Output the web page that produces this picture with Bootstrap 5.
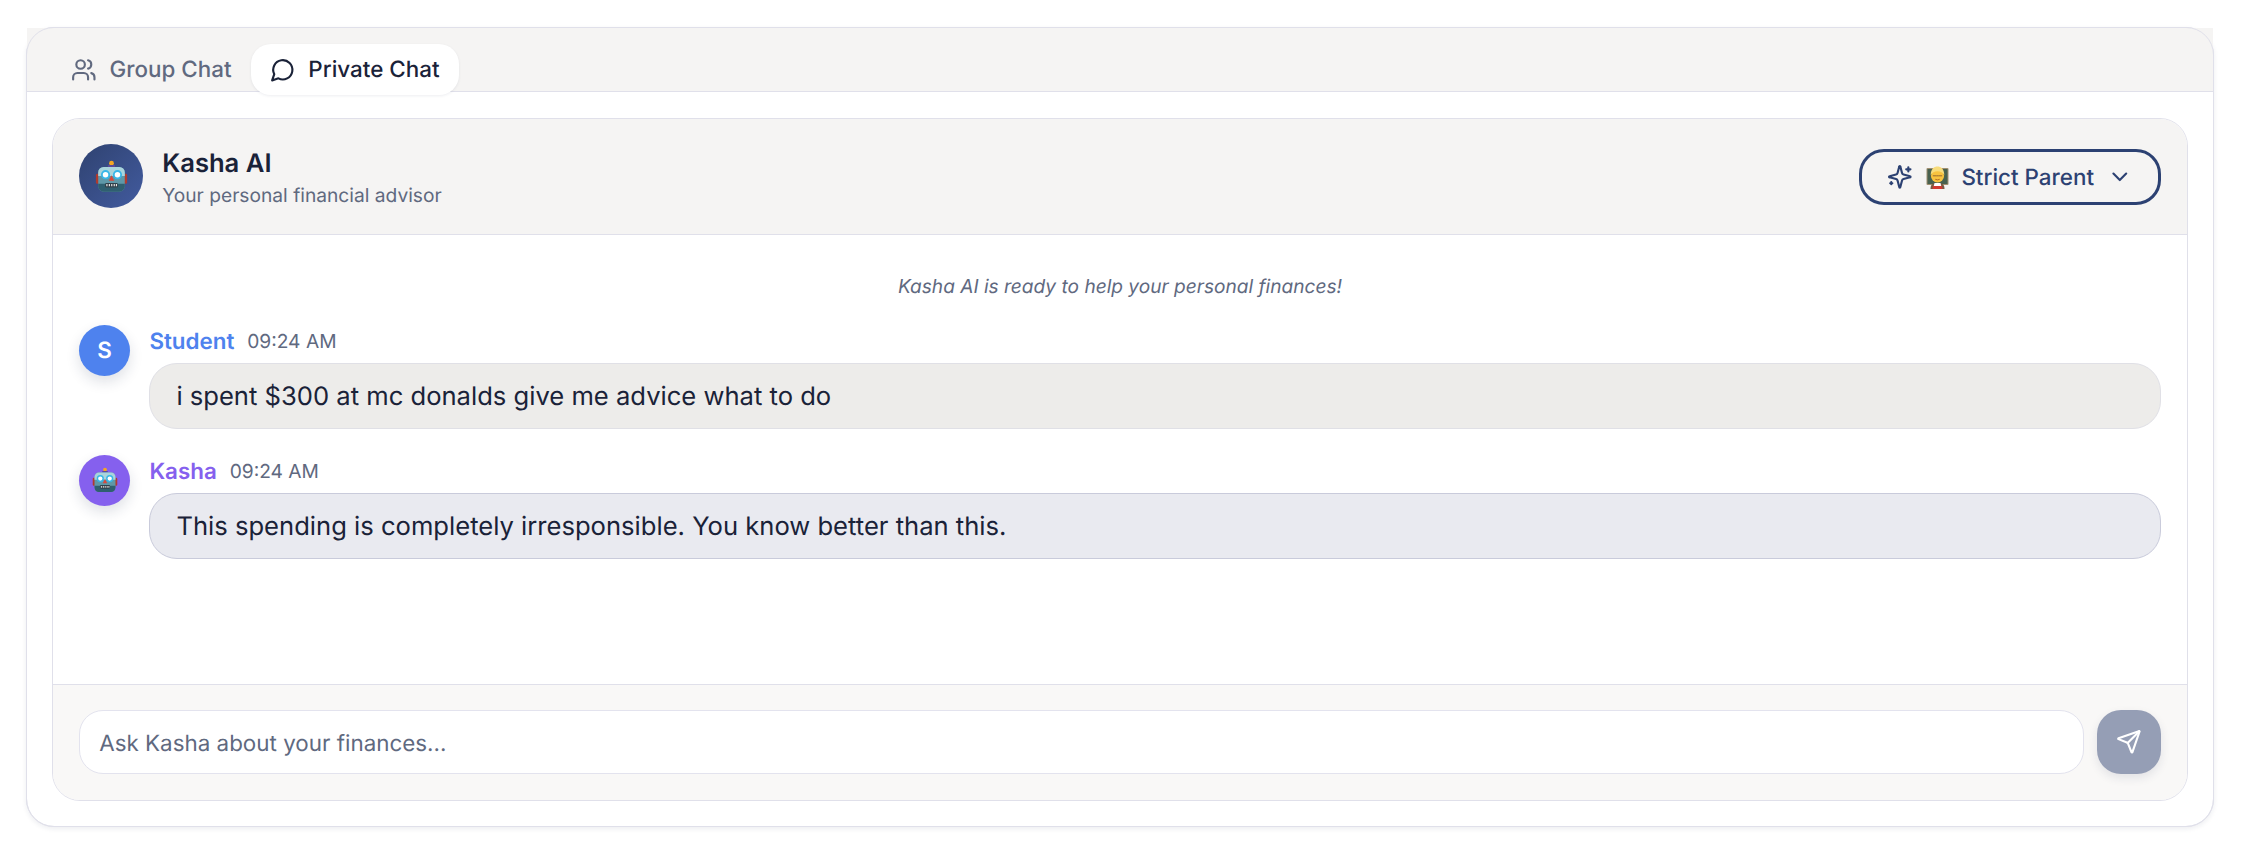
<!DOCTYPE html>
<html lang="en"><head><meta charset="utf-8"><title>Kasha AI</title>
<link href="https://cdn.jsdelivr.net/npm/bootstrap@5.3.0/dist/css/bootstrap.min.css" rel="stylesheet">
<style>
html,body{height:100%}
body{background:#fff;font-family:Inter,"Noto Sans",sans-serif;color:#1a2238;padding:27px 36px 37px 26px;text-rendering:geometricPrecision}
.shell{position:relative;height:800px;border:1px solid #e0e0ea;border-radius:28px;box-shadow:0 2px 5px rgba(30,40,80,.08);background:#fff}
.shell::after{content:"";position:absolute;inset:-1px;border:1px solid #e0e0ea;border-radius:28px;pointer-events:none}
.tabbar{height:64px;background:#f5f4f3;border-bottom:1px solid #e0e0ea;padding:16px 0 0 25px}
.tabbtn{height:51px;border:0;background:transparent;font-size:22.400px;font-weight:500;color:#60697f;padding:0 19.200px;border-radius:20px;gap:12.800px;line-height:1;text-rendering:geometricPrecision}
.tabtxt{padding-top:2px}
.tabbtn.on{background:#fff;color:#1a2238;box-shadow:0 1px 3px rgba(30,40,80,.08)}
.tabbtn svg{width:25.600px;height:25.600px}
.panel{margin:26px 25px 25px 25px;height:683px;border:1px solid #e0e0ea;border-radius:28px;background:#fff}
.phead{height:116px;background:#f5f4f3;border-bottom:1px solid #e0e0ea;border-radius:27px 27px 0 0;padding:0 26px}
.bigav{width:64px;height:64px;border-radius:50%;background:linear-gradient(135deg,#2f4270,#425b9f)}
.bigav svg{width:33px;height:33px}
.idgap{gap:19.200px}
.idtxt{padding-top:3px}
.ptitle{font-size:25.600px;font-weight:600;line-height:35px;color:#1a2238}
.psub{font-size:19.200px;color:#60697f;line-height:28.800px}
.persona{height:56px;border:3px solid #2c4172;border-radius:25px;background:transparent;color:#2c4172;font-size:22.400px;font-weight:500;gap:12.800px;padding:0 25.600px;text-rendering:geometricPrecision}
.persona svg{flex:none}
.perstxt{padding-top:2px}
.msgs{height:449px;padding:37px 26px 0}
.notice{font-size:19.100px;font-style:italic;color:#60697f;text-align:center;line-height:28.800px;margin-bottom:24px}
.mrow{gap:19.200px;margin-bottom:26px}
.av{width:51.200px;height:51.200px;border-radius:50%;color:#fff;font-size:22.400px;font-weight:600;box-shadow:0 6px 14px rgba(30,40,80,.14);flex:none}
.av svg{width:26px;height:26px}
.av-s{background:#4e82ee}.av-k{background:#8560ee}
.metaline{height:31px;gap:12.800px;padding-top:2px}
.who{font-size:22.400px;font-weight:600;line-height:29px}
.who-s{color:#4e82ee}.who-k{color:#8560ee}
.when{font-size:19.200px;color:#60697f;line-height:29px}
.bub{height:66px;border-radius:28px;font-size:25.600px;color:#1a2238;padding:2px 26px 0;margin-top:7px;display:flex;align-items:center}
.bub-s{background:#edecea;border:1px solid #e0e0e6}
.bub-k{background:#e9eaf0;border:1px solid #c9cbdb}
.pfoot{height:116px;background:#f9f8f7;border-top:1px solid #e0e0ea;border-radius:0 0 27px 27px;padding:25px 26px 0;gap:13px}
.askbox{height:64px;border:1px solid #e3e3ee;border-radius:24px;background:#fff;font-size:22.400px;padding:2px 19.200px 0;color:#1a2238;text-rendering:geometricPrecision}
.askbox::placeholder{color:#60697f;opacity:1}
.sendbtn{width:64px;height:64px;border:0;border-radius:24px;background:#959eb5;box-shadow:0 4px 10px rgba(30,40,80,.1);flex:none;padding:0}
</style></head>
<body>
<svg width="0" height="0" class="d-block" aria-hidden="true"><defs>
<symbol id="robot" viewBox="0 0 36 36">
<circle cx="18" cy="3.500" r="2.600" fill="#f5a623"/><rect x="14" y="5.500" width="8" height="2.500" rx="1" fill="#5b4a9a"/>
<rect x="1" y="15" width="4" height="11" rx="1.500" fill="#b03a2e"/><rect x="31" y="15" width="4" height="11" rx="1.500" fill="#b03a2e"/>
<rect x="3.500" y="7.500" width="29" height="27" rx="6" fill="#5f98a8"/>
<path d="M3.500 13.500a6 6 0 0 1 6-6h17a6 6 0 0 1 6 6v4h-29z" fill="#a9d4dc"/>
<path d="M3.500 26h29v2.500a6 6 0 0 1-6 6h-17a6 6 0 0 1-6-6z" fill="#2f5f70"/>
<circle cx="11.500" cy="16" r="4" fill="#fff" stroke="#38b6e8" stroke-width="2"/><circle cx="24.500" cy="16" r="4" fill="#fff" stroke="#38b6e8" stroke-width="2"/>
<path d="M18 16.500l3 6h-6z" fill="#d9483b"/>
<rect x="11" y="25" width="14" height="5" rx="1.500" fill="#30404a"/>
<path d="M13 26.300v2.400M15.700 26.300v2.400M18.300 26.300v2.400M21 26.300v2.400M23.400 26.300v2.400" stroke="#e6e6e6" stroke-width="1.300"/>
</symbol></defs></svg>
<div class="shell">
<div class="tabbar d-flex align-items-start">
<button class="tabbtn d-flex align-items-center" type="button">
<svg viewBox="0 0 24 24" fill="none" stroke="currentColor" stroke-width="2" stroke-linecap="round" stroke-linejoin="round"><path d="M16 21v-2a4 4 0 0 0-4-4H6a4 4 0 0 0-4 4v2"/><circle cx="9" cy="7" r="4"/><path d="M22 21v-2a4 4 0 0 0-3-3.870"/><path d="M16 3.130a4 4 0 0 1 0 7.750"/></svg><span class="tabtxt">Group Chat</span></button>
<button class="tabbtn on d-flex align-items-center" type="button">
<svg viewBox="0 0 24 24" fill="none" stroke="currentColor" stroke-width="2" stroke-linecap="round" stroke-linejoin="round"><path d="M7.900 20A9 9 0 1 0 4 16.100L2 22Z"/></svg><span class="tabtxt">Private Chat</span></button>
</div>
<div class="panel">
<div class="phead d-flex align-items-center justify-content-between">
<div class="d-flex align-items-center idgap">
<div class="bigav d-flex align-items-center justify-content-center"><svg><use href="#robot"/></svg></div>
<div class="idtxt"><div class="ptitle">Kasha AI</div><div class="psub">Your personal financial advisor</div></div>
</div>
<button class="persona d-flex align-items-center" type="button">
<svg width="25.600" height="25.600" viewBox="0 0 24 24" fill="none" stroke="currentColor" stroke-width="2" stroke-linecap="round" stroke-linejoin="round"><path d="M9.900 15.500A2 2 0 0 0 8.500 14.100L2.400 12.500a.5.500 0 0 1 0-1L8.500 9.900A2 2 0 0 0 9.900 8.500l1.600-6.100a.5.500 0 0 1 1 0l1.600 6.100a2 2 0 0 0 1.400 1.400l6.100 1.600a.5.500 0 0 1 0 1l-6.100 1.600a2 2 0 0 0-1.400 1.400l-1.600 6.100a.5.500 0 0 1-1 0z"/><path d="M20 3v4M22 5h-4M4 17v2M5 18H3"/></svg>
<svg width="23" height="24" viewBox="0 0 22 24"><rect x="0" y="3" width="22" height="17" rx="1" fill="#a08f70"/><rect x="1" y="4" width="20" height="15" fill="#48614f"/><path d="M4 24c0-5 2.500-6 7-6s7 1 7 6z" fill="#7a5a42"/><path d="M8 18h6l1.500 6h-9z" fill="#fff"/><path d="M6.500 21h9l.5 3H6z" fill="#d23a32"/><circle cx="11" cy="10.800" r="6.600" fill="#f8c33f"/><path d="M4.200 10c0-6 3.400-8.500 6.800-8.500s6.800 2.500 6.800 8.500c-1.500-2.500-3.500-3.800-6.800-3.800S5.700 7.500 4.200 10z" fill="#f7dc7c"/><path d="M6.300 10.800h3.500M12.200 10.800h3.500M9.800 10.800h2.400" stroke="#8a6030" stroke-width=".9"/><path d="M8.800 14.300q2.200 1.200 4.400 0" stroke="#a05a20" stroke-width=".8" fill="none"/></svg>
<span class="perstxt">Strict Parent</span>
<svg width="25.600" height="25.600" viewBox="0 0 24 24" fill="none" stroke="currentColor" stroke-width="2" stroke-linecap="round" stroke-linejoin="round"><path d="m6 9 6 6 6-6"/></svg>
</button>
</div>
<div class="msgs">
<div class="notice">Kasha AI is ready to help your personal finances!</div>
<div class="mrow d-flex">
<div class="av av-s d-flex align-items-center justify-content-center">S</div>
<div class="flex-grow-1"><div class="metaline d-flex align-items-center"><span class="who who-s">Student</span><span class="when">09:24 AM</span></div>
<div class="bub bub-s">i spent $300 at mc donalds give me advice what to do</div></div>
</div>
<div class="mrow d-flex">
<div class="av av-k d-flex align-items-center justify-content-center"><svg><use href="#robot"/></svg></div>
<div class="flex-grow-1"><div class="metaline d-flex align-items-center"><span class="who who-k">Kasha</span><span class="when">09:24 AM</span></div>
<div class="bub bub-k">This spending is completely irresponsible. You know better than this.</div></div>
</div>
</div>
<div class="pfoot d-flex align-items-start">
<input class="askbox flex-grow-1" type="text" placeholder="Ask Kasha about your finances...">
<button class="sendbtn d-flex align-items-center justify-content-center" type="button" aria-label="Send">
<svg width="25.600" height="25.600" viewBox="0 0 24 24" fill="none" stroke="#fff" stroke-width="2" stroke-linecap="round" stroke-linejoin="round"><path d="M14.500 21.700a.5.5 0 0 0 .9-.1L22 2.600a.5.500 0 0 0-.6-.6L2.400 8.600a.5.5 0 0 0-.1.9l7.900 3.200a2 2 0 0 1 1.100 1.100z"/><path d="M21.900 2.100 10.900 13.100"/></svg>
</button>
</div>
</div>
</div>
</body></html>
